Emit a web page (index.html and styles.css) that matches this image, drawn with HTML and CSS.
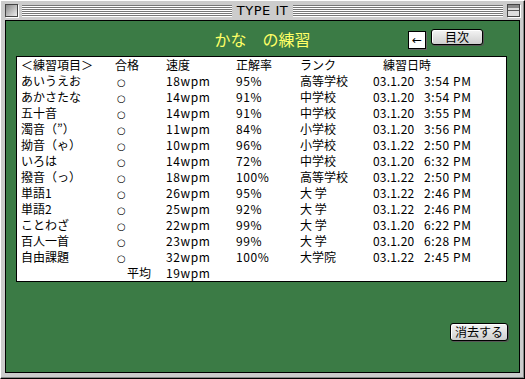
FILE: index.html
```html
<!DOCTYPE html>
<html lang="ja">
<head>
    <meta charset="UTF-8">
    <title>TYPE IT</title>
    <link rel="stylesheet" href="styles.css">
</head>
<body>
    <div class="window">
        <div class="titlebar">
            <span class="closebox"></span>
            <span class="stripes"></span>
            <span class="wintitle">TYPE IT</span>
            <span class="stripes"></span>
            <span class="zoombox"></span>
        </div>
        <div class="content">
            <div class="head">
                <h1 class="title">かな　の練習</h1>
                <div class="nav">
                    <button class="back">←</button>
                    <button class="btn btn-menu">目次</button>
                </div>
            </div>
            <div class="panel">
                <table class="records">
                    <colgroup>
                        <col class="c-name"><col class="c-pass"><col class="c-speed"><col class="c-acc"><col class="c-rank"><col class="c-date"><col>
                    </colgroup>
                    <tr><td>＜練習項目＞</td><td>合格</td><td>速度</td><td>正解率</td><td>ランク</td><td colspan="2" class="h-date">練習日時</td></tr>
                    <tr><td>あいうえお</td><td><span class="ok">○</span></td><td class="num">18wpm</td><td class="num">95%</td><td>高等学校</td><td class="date">03.1.20</td><td class="num">3:54 PM</td></tr>
                    <tr><td>あかさたな</td><td><span class="ok">○</span></td><td class="num">14wpm</td><td class="num">91%</td><td>中学校</td><td class="date">03.1.20</td><td class="num">3:54 PM</td></tr>
                    <tr><td>五十音</td><td><span class="ok">○</span></td><td class="num">14wpm</td><td class="num">91%</td><td>中学校</td><td class="date">03.1.20</td><td class="num">3:55 PM</td></tr>
                    <tr><td>濁音（”）</td><td><span class="ok">○</span></td><td class="num">11wpm</td><td class="num">84%</td><td>小学校</td><td class="date">03.1.20</td><td class="num">3:56 PM</td></tr>
                    <tr><td>拗音（ゃ）</td><td><span class="ok">○</span></td><td class="num">10wpm</td><td class="num">96%</td><td>小学校</td><td class="date">03.1.22</td><td class="num">2:50 PM</td></tr>
                    <tr><td>いろは</td><td><span class="ok">○</span></td><td class="num">14wpm</td><td class="num">72%</td><td>中学校</td><td class="date">03.1.20</td><td class="num">6:32 PM</td></tr>
                    <tr><td>撥音（っ）</td><td><span class="ok">○</span></td><td class="num">18wpm</td><td class="num">100%</td><td>高等学校</td><td class="date">03.1.22</td><td class="num">2:50 PM</td></tr>
                    <tr><td>単語1</td><td><span class="ok">○</span></td><td class="num">26wpm</td><td class="num">95%</td><td>大 学</td><td class="date">03.1.22</td><td class="num">2:46 PM</td></tr>
                    <tr><td>単語2</td><td><span class="ok">○</span></td><td class="num">25wpm</td><td class="num">92%</td><td>大 学</td><td class="date">03.1.22</td><td class="num">2:46 PM</td></tr>
                    <tr><td>ことわざ</td><td><span class="ok">○</span></td><td class="num">22wpm</td><td class="num">99%</td><td>大 学</td><td class="date">03.1.20</td><td class="num">6:22 PM</td></tr>
                    <tr><td>百人一首</td><td><span class="ok">○</span></td><td class="num">23wpm</td><td class="num">99%</td><td>大 学</td><td class="date">03.1.20</td><td class="num">6:28 PM</td></tr>
                    <tr><td>自由課題</td><td><span class="ok">○</span></td><td class="num">32wpm</td><td class="num">100%</td><td>大学院</td><td class="date">03.1.22</td><td class="num">2:45 PM</td></tr>
                    <tr><td></td><td class="avg">平均</td><td class="num">19wpm</td><td></td><td></td><td></td><td></td></tr>
                </table>
            </div>
            <div class="foot">
                <button class="btn btn-clear">消去する</button>
            </div>
        </div>
    </div>
</body>
</html>
```

FILE: styles.css
```css
body {
    margin: 0;
    padding: 0;
    background-color: #ffffff;
    font-family: "Noto Sans CJK JP", sans-serif;
}
.window {
    width: 525px;
    height: 379px;
    box-sizing: border-box;
    background-color: #cccccc;
    border-top: 1px solid #ffffff;
    border-left: 1px solid #ffffff;
    border-right: 1px solid #000000;
    border-bottom: 1px solid #000000;
    box-shadow: inset -1px -1px 0 #888888;
    padding: 0 4px 0 4px;
}
.titlebar {
    height: 19px;
    display: flex;
    align-items: center;
    gap: 4px;
}
.closebox, .zoombox {
    width: 11px;
    height: 11px;
    border: 1px solid #444444;
    background: linear-gradient(135deg, #888888, #eeeeee);
    box-shadow: 1px 1px 0 #ffffff;
    flex: none;
}
.zoombox {
    background: linear-gradient(#888888 0, #888888 3px, #dddddd 3px, #dddddd 5px, #555555 5px, #555555 6px, #dddddd 6px);
}
.stripes {
    flex: 1;
    height: 12px;
    background: repeating-linear-gradient(#777777 0, #777777 1px, #ffffff 1px, #ffffff 2px);
}
.wintitle {
    font-family: "DejaVu Sans", sans-serif;
    font-size: 13px;
    color: #000000;
    padding: 0 1px;
    letter-spacing: 0.5px;
}
.content {
    height: 353px;
    box-sizing: border-box;
    background-color: #3b7b45;
    border: 1px solid #000000;
}
.head {
    height: 35px;
    display: grid;
    grid-template-columns: 1fr auto 1fr;
    align-items: center;
}
.title {
    grid-column: 2;
    margin: 0;
    font-size: 16px;
    font-weight: normal;
    color: #ffff66;
    line-height: 20px;
    padding-top: 1px;
}
.nav {
    grid-column: 3;
    justify-self: end;
    margin-right: 36px;
    display: flex;
    gap: 5px;
    align-items: flex-start;
}
.back {
    width: 18px;
    height: 18px;
    margin-top: 2px;
    padding: 0;
    border: 1px solid #000000;
    background-color: #ffffff;
    box-shadow: 1px 1px 0 #666666;
    font-family: "DejaVu Sans", sans-serif;
    font-size: 12px;
    line-height: 14px;
}
.btn {
    font-family: "Noto Sans CJK JP", sans-serif;
    font-size: 12px;
    padding: 0;
    border: 1px solid #000000;
    border-radius: 3px;
    background: linear-gradient(#f4f4f4, #cfcfcf);
    box-shadow: 1px 1px 0 #555555, inset 1px 1px 0 #ffffff;
    color: #000000;
    line-height: 14px;
}
.btn-menu {
    width: 52px;
    height: 16px;
}
.panel {
    margin: 0 12px 0 10px;
    height: 226px;
    box-sizing: border-box;
    background-color: #ffffff;
    border: 1px solid #000000;
    padding-left: 4px;
    overflow: hidden;
}
.records {
    border-collapse: collapse;
    table-layout: fixed;
    width: 100%;
    font-size: 12px;
    line-height: 16px;
    color: #000000;
}
.records tr {
    height: 16px;
}
.records td {
    padding: 0;
    height: 16px;
    line-height: 16px;
    white-space: nowrap;
    overflow: hidden;
    vertical-align: middle;
}
.records td.num {
    letter-spacing: 0.6px;
}
.records td.date {
    letter-spacing: 0.2px;
}
.c-name { width: 94px; }
.c-pass { width: 51px; }
.c-speed { width: 70px; }
.c-acc { width: 64px; }
.c-rank { width: 73px; }
.c-date { width: 51px; }
.h-date {
    padding-left: 10px !important;
}
.ok {
    display: inline-block;
    font-family: "DejaVu Sans", sans-serif;
    font-size: 10px;
    line-height: 10px;
    vertical-align: 0;
    padding-left: 2px;
}
.avg {
    padding-left: 12px !important;
}
.foot {
    display: flex;
    justify-content: flex-end;
    padding: 41px 11px 0 0;
}
.btn-clear {
    width: 58px;
    height: 18px;
}
```
